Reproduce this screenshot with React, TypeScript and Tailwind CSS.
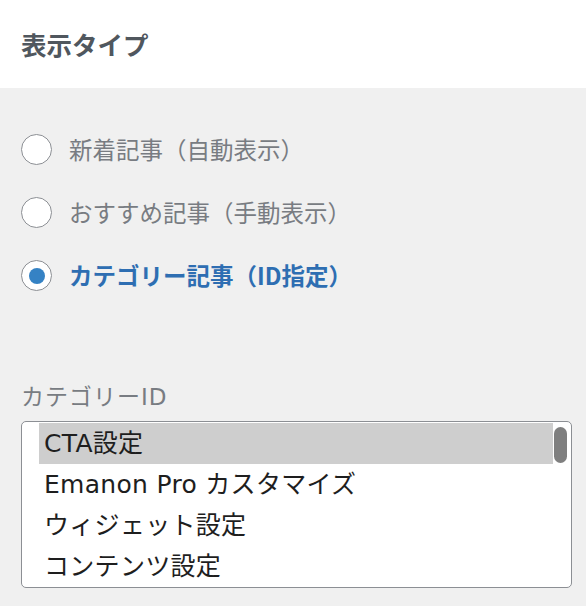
const font = { fontFamily: '"Noto Sans CJK JP", "Noto Sans", sans-serif' }
const listFont = { fontFamily: '"DejaVu Sans", "Noto Sans CJK JP", sans-serif' }

type Option = { id: string; label: string }

const displayTypes: Option[] = [
  { id: 'new', label: '新着記事（自動表示）' },
  { id: 'pickup', label: 'おすすめ記事（手動表示）' },
  { id: 'category', label: 'カテゴリー記事（ID指定）' },
]

const categories = ['CTA設定', 'Emanon Pro カスタマイズ', 'ウィジェット設定', 'コンテンツ設定']

function Radio({ option, checked }: { option: Option; checked: boolean }) {
  return (
    <div className="flex h-[63px] items-center">
      <span className="flex h-[31px] w-[31px] shrink-0 items-center justify-center rounded-full border-[1.5px] border-[#8c8f94] bg-white">
        {checked ? <span className="h-[16px] w-[16px] rounded-full bg-[#3582c4]" /> : null}
      </span>
      <span className={checked ? 'ml-[17px] text-[23.5px] font-bold text-[#2e6eb2]' : 'ml-[17px] text-[23.5px] text-[#787c82]'}>{option.label}</span>
    </div>
  )
}

export default function App() {
  const selected = 'category'

  return (
    <div className="h-[606px] w-[586px] overflow-hidden bg-[#f0f0f0]" style={font}>
      <div className="flex h-[88px] items-center bg-white px-[21px]">
        <h2 className="text-[25.5px] font-bold text-[#50575e]">表示タイプ</h2>
      </div>

      <div className="px-[21px] pt-[30px]">
        {displayTypes.map((option) => (
          <Radio key={option.id} option={option} checked={option.id === selected} />
        ))}

        <p className="mt-[75px] text-[23px] leading-[30px] tracking-[1px] text-[#787c82]" style={listFont}>カテゴリーID</p>

        <div className="relative mt-[9px] h-[167px] w-[551px] rounded-[5px] border-[1.5px] border-[#8c8f94] bg-white pl-[17px] pr-[18px] pt-[1px]" style={listFont}>
          {categories.map((category, index) => (
            <div
              key={category}
              className={index === 0 ? 'flex h-[41px] items-center bg-[#cecece] pl-[5px] text-[25px] tracking-[0.3px] text-[#1e1e1e]' : 'flex h-[41px] items-center pl-[5px] text-[25px] tracking-[0.3px] text-[#1e1e1e]'}
            >
              {category}
            </div>
          ))}
          <span className="absolute right-[4px] top-[5px] h-[36px] w-[13px] rounded-full bg-[#7f7f7f]" />
        </div>
      </div>
    </div>
  )
}
